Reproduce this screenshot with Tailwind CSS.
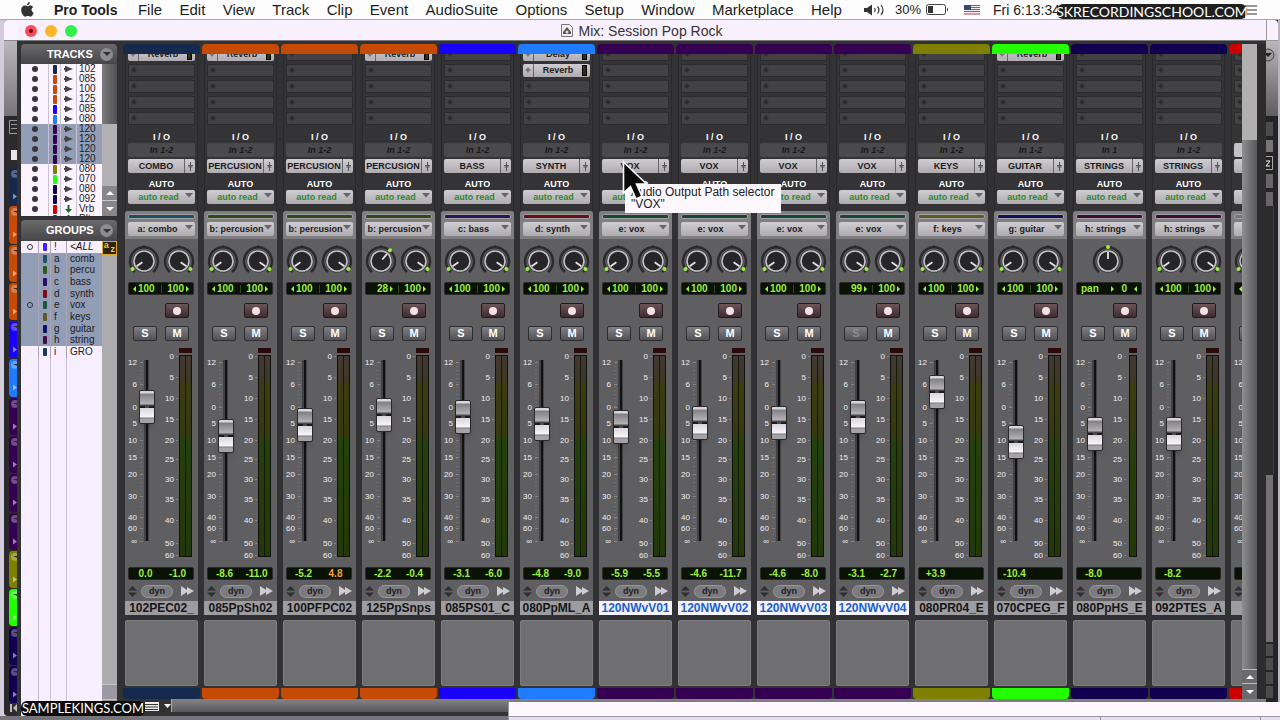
<!DOCTYPE html>
<html lang="en">
<head>
<meta charset="utf-8">
<title>Mix: Session Pop Rock</title>
<script src="https://cdn.jsdelivr.net/npm/@tailwindcss/browser@4"></script>
</head>
<body class="relative flex h-screen min-h-[720px] flex-col overflow-hidden bg-[#77757b] font-['Liberation_Sans',Arial,sans-serif] text-[#1c1c1c]">

<!-- System menu bar -->
<header class="flex h-5 shrink-0 items-center border-b border-[#a9a6ad] bg-[#fefdfe] text-[15px] leading-none whitespace-nowrap">
  <svg class="ml-[21px] h-[15px] w-[13px]" viewBox="0 0 13 15" fill="#333"><path d="M8.8 0C8.9 1.6 7.6 3.2 6.1 3.2 5.9 1.700 7.300.2 8.800 0zM6.500 4.300C7.200 4.300 8.100 3.500 9.400 3.500c1.200 0 2.200.6 2.800 1.500-2.400 1.500-2 4.700.5 5.700-.6 1.700-1.900 4-3.300 4-1 0-1.400-.6-2.600-.6s-1.700.6-2.600.6C2.500 14.700.2 11.300.2 8.100.2 5.200 2 3.600 3.900 3.600c1.100 0 2 .7 2.600.7z"/></svg>
  <nav class="ml-5 flex w-[788px] items-center justify-between">
    <a href="#" class="mr-[3px] text-sm leading-none font-bold">Pro Tools</a>
    <a href="#">File</a><a href="#">Edit</a><a href="#">View</a><a href="#">Track</a><a href="#">Clip</a><a href="#">Event</a><a href="#">AudioSuite</a><a href="#">Options</a><a href="#">Setup</a><a href="#">Window</a><a href="#">Marketplace</a><a href="#">Help</a>
  </nav>
  <div class="ml-[22px] flex items-center text-sm leading-none">
    <svg class="h-3 w-[22px]" viewBox="0 0 22 12" fill="none" stroke="#333" stroke-width="1.200"><path d="M0 4h3l5-3.500v11L3 8H0z" fill="#333" stroke="none"/><path d="M10.500 4q1.500 2 0 4M13.500 2.500q3 3.500 0 7M17 1q4 5 0 10"/></svg>
    <span class="ml-[9px] text-[13px]">30%</span>
    <svg class="ml-[5px] h-[11px] w-[23px]" viewBox="0 0 23 11"><rect x=".5" y=".5" width="19" height="10" rx="2" fill="none" stroke="#444"/><path d="M2 2h5v7H2z" fill="#333"/><path d="M21 3.500q2 2 0 4z" fill="#333"/></svg>
    <svg class="ml-[15px] h-[10px] w-4" viewBox="0 0 16 10"><path fill="#eee" d="M0 0h16v10H0z"/><path stroke="#c4454f" d="M0 .5h16M0 2.500h16M0 4.500h16M0 6.500h16M0 9h16"/><path fill="#3e4577" d="M0 0h7v5H0z"/></svg>
    <span class="ml-[13px] text-sm">Fri 6:13:34</span>
  </div>
  <svg class="mr-[23px] ml-auto h-[10px] w-3" viewBox="0 0 12 10" stroke="#333" stroke-width="1.200"><path d="M0 1h12M0 5h12M0 9h12"/></svg>
</header>

<main class="flex min-h-0 flex-1 pb-1">
  <!-- Edit window, left edge behind the mixer -->
  <aside class="flex w-[17px] shrink-0 bg-[#d3ccdc] pl-1">
    <div class="flex flex-1 flex-col overflow-hidden rounded-l-sm bg-[#2b2a2d]">
      <div class="h-[21px] shrink-0 border-b border-[#888] bg-[#faf3fd]"></div>
      <div class="h-[75px] shrink-0 bg-linear-to-b from-[#b9b7bb] to-[#77757a]"></div>
      <div class="flex h-[52px] shrink-0 flex-col items-end gap-4 pt-1">
        <svg class="h-[14px] w-2" viewBox="0 0 8 14"><path d="M8 .5H.5v13H8M2 4.500h6M2 8.500h6" fill="none" stroke="#999"/></svg>
        <div class="h-[10px] w-[6px] bg-[#e8e4ec]"></div>
      </div>
      <div id="edge" class="flex h-[536px] shrink-0 flex-col pl-[5px]"></div>
      <svg class="ml-[6px] h-2 w-[7px] shrink-0" viewBox="0 0 7 8"><path d="M0 0h2v8H0zM7 0v8L3 4z" fill="#bbb"/></svg>
    </div>
  </aside>

  <!-- Mix window -->
  <section class="flex min-w-0 flex-1 flex-col bg-[#323134]">
    <div class="relative flex h-[21px] shrink-0 items-center border-b border-[#777] bg-[#f9f0fd]">
      <div class="flex gap-2 pt-px pl-2">
        <button aria-label="Close" class="flex size-3 items-center justify-center rounded-full bg-[#fb4a5c]"><span class="size-1 rounded-full bg-[#5c0810]"></span></button>
        <button aria-label="Minimize" class="size-3 rounded-full bg-[#fdb62a]"></button>
        <button aria-label="Zoom" class="size-3 rounded-full bg-[#2ff048]"></button>
      </div>
      <h1 class="absolute inset-0 flex items-center justify-center gap-[6px] pt-px text-sm leading-none text-[#333]">
        <svg class="h-[13px] w-3" viewBox="0 0 12 13"><path d="M.5.500h8l3 3v9H.5z" fill="#eee" stroke="#777"/><path d="M2 10V8l4-5 4 5v2z" fill="#555"/><circle cx="6" cy="8" r="1.500" fill="#ddd"/></svg>
        Mix: Session Pop Rock
      </h1>
    </div>

    <div class="flex min-h-0 flex-1 pt-[3px] pl-1">
      <!-- Track and group lists -->
      <aside class="flex w-24 shrink-0 flex-col">
        <h2 class="flex h-5 shrink-0 items-center rounded-t bg-linear-to-b from-[#6a696c] to-[#464548] pl-[26px] text-[11px] font-bold text-white">TRACKS
          <button aria-label="Track list menu" class="mr-1 ml-auto flex size-[13px] items-center justify-center rounded-full bg-[#8d8c90]"><svg class="h-1 w-2" viewBox="0 0 8 4"><path d="M0 0h8L4 4z" fill="#333"/></svg></button>
        </h2>
        <div class="flex h-[152px] shrink-0 overflow-hidden">
          <ul id="tracks" class="grid h-[160px] flex-1 grid-rows-16 bg-[#fbf3ff] text-[10px] leading-none"></ul>
          <div class="flex w-[15px] shrink-0 flex-col bg-linear-to-r from-[#7c7b7e] to-[#515053]">
            <div class="flex-1"></div><div class="h-[62px] bg-[#b3b1b4]"></div>
            <button aria-label="Scroll up" class="flex h-[15px] items-center justify-center border-b border-[#ccc] bg-[#88868a]"><svg class="h-1 w-2" viewBox="0 0 8 4"><path d="M0 4h8L4 0z" fill="#fff"/></svg></button>
            <button aria-label="Scroll down" class="flex h-[15px] items-center justify-center bg-[#88868a]"><svg class="h-1 w-2" viewBox="0 0 8 4"><path d="M0 0h8L4 4z" fill="#fff"/></svg></button>
          </div>
        </div>
        <h2 class="mt-1 flex h-[21px] shrink-0 items-center rounded-t bg-linear-to-b from-[#6a696c] to-[#464548] pl-[25px] text-[11px] font-bold text-white">GROUPS
          <button aria-label="Group list menu" class="mr-1 ml-auto flex size-[13px] items-center justify-center rounded-full bg-[#8d8c90]"><svg class="h-1 w-2" viewBox="0 0 8 4"><path d="M0 0h8L4 4z" fill="#333"/></svg></button>
        </h2>
        <div class="flex flex-1">
          <div class="flex flex-1 flex-col bg-[#f7eeff]">
            <ul id="groups" class="grid h-[117px] grid-rows-10 text-[10px] leading-none"></ul>
            <div class="flex flex-1"><div class="w-[18px] border-r border-[#c9c0d2]"></div><div class="w-3 border-r border-[#c9c0d2]"></div><div class="w-4 border-r border-[#c9c0d2]"></div></div>
          </div>
          <div class="flex w-[15px] flex-col bg-[#adacae]">
            <button aria-label="Sort groups" class="flex h-[14px] border border-[#e0a820] bg-[#2b2410] text-[9px] leading-none font-bold text-[#ffc32a]"><span class="-mt-px flex-1">a</span><span class="mt-[3px] flex-1">z</span></button>
            <div class="mt-auto h-4 border-y border-[#c5c2c8] bg-[#9c9aa0]"></div><div class="h-4 bg-[#9c9aa0]"></div>
          </div>
        </div>
      </aside>

      <!-- Mixer -->
      <div class="ml-[6px] flex min-w-0 flex-1 flex-col">
        <div class="flex min-h-0 flex-1">
          <div id="strips" class="flex min-w-0 flex-1 overflow-hidden"></div>
          <div class="flex w-[15px] shrink-0 flex-col bg-linear-to-r from-[#8f8e91] to-[#58575a]">
            <div class="h-24 bg-[#b1b0af]"></div><div class="flex-1"></div>
            <button aria-label="Scroll mixer up" class="flex h-[15px] items-center justify-center border-y border-[#bbb] bg-[#6a696c]"><svg class="h-1 w-2" viewBox="0 0 8 4"><path d="M0 4h8L4 0z" fill="#fff"/></svg></button>
            <button aria-label="Scroll mixer down" class="flex h-[15px] items-center justify-center bg-[#6a696c]"><svg class="h-1 w-2" viewBox="0 0 8 4"><path d="M0 0h8L4 4z" fill="#fff"/></svg></button>
          </div>
          <div class="w-[9px] shrink-0 bg-[#2c2b2e]"></div>
        </div>
        <div class="flex h-[17px] shrink-0 items-start">
          <button aria-label="View options" class="ml-[22px] flex h-[14px] w-[26px] items-center gap-[5px]">
            <svg class="h-[9px] w-[14px]" viewBox="0 0 14 9"><path d="M0 0h14v9H0z" fill="#eee"/><path d="M0 2.500h13M0 5h13M0 7.500h13" stroke="#333"/></svg>
            <svg class="h-1 w-[7px]" viewBox="0 0 7 4"><path d="M0 0h7L3.500 4z" fill="#fff"/></svg>
          </button>
          <div class="h-[13px] flex-1 border-l border-[#aaa] bg-linear-to-b from-[#858487] to-[#59585b]"></div>
        </div>
      </div>
    </div>
  </section>

  <!-- Edit window, right edge behind the mixer -->
  <aside class="flex w-[14px] shrink-0 flex-col border-r-2 border-[#b9b4c0] bg-[#242326]">
    <div class="h-[21px] shrink-0 rounded-tr border-b border-l border-[#999] bg-[#f9f0fd]"></div>
    <div class="flex h-[75px] shrink-0 bg-linear-to-b from-[#b9b7bb] to-[#5f5d62] pt-[7px]"><svg class="h-[14px] w-[9px]" viewBox="0 0 9 14"><circle cx="2" cy="7" r="6" fill="#99979b" stroke="#444"/><path d="M-2 5h8L2 9z" fill="#222"/></svg></div>
    <div class="flex h-[90px] shrink-0 flex-col gap-1 pt-[6px]">
      <div class="h-[14px] w-[7px] bg-[#4c4b4e]"></div><div class="h-[12px] w-[7px] bg-[#77757a]"></div><svg class="h-[14px] w-[7px]" viewBox="0 0 7 14"><path d="M0 .5h6.500v13H0" fill="#222" stroke="#aaa"/><path d="M0 5h4L0 10h4" fill="none" stroke="#fff"/></svg><div class="h-[14px] w-[7px] bg-[#67656a]"></div><div class="h-[14px] w-[7px] bg-[#67656a]"></div>
    </div>
    <div class="w-[8px] flex-1 border-r border-[#3f3e41] bg-[#2c2b2e]"></div>
    <div class="h-[167px] w-[7px] shrink-0 bg-[#737175]"></div>
    <div class="flex h-[74px] shrink-0 flex-col gap-[2px] pt-[2px]"><div class="h-3 w-[7px] bg-[#4c4b4e]"></div><div class="h-3 w-[7px] bg-[#4c4b4e]"></div><div class="h-3 w-[7px] bg-[#4c4b4e]"></div><div class="h-3 w-[7px] bg-[#4c4b4e]"></div></div>
  </aside>
</main>

<!-- Window in front at the bottom edge -->
<div class="absolute right-0 bottom-0 left-[508px] flex h-[18px] flex-col border-l border-[#999] bg-[#fdf8fe]">
  <div class="mt-auto flex h-1 border-t border-[#9a97a8] bg-[#e3e0ee]"><div class="flex-1"></div><div class="w-[161px] border-x border-[#9a97a8]"></div><div class="w-[19px]"></div></div>
</div>

<!-- Output selector tooltip and pointer -->
<div role="tooltip" class="absolute top-[184px] left-[625px] h-[29px] w-[156px] bg-[#fcf8fd] pt-[2px] pl-[6px] text-xs leading-3 whitespace-nowrap text-[#222]">Audio Output Path selector<br>"VOX"</div>
<svg class="absolute top-[160px] left-[622px] h-[42px] w-[28px]" viewBox="0 0 28 42"><path d="M1.500 2v31l7-6.500 5.500 12.500 6-2.700-5.500-12.300h10z" fill="#0a0a0a" stroke="#fff" stroke-width="1.600"/></svg>

<!-- Watermarks -->
<div class="absolute top-1 right-[33px] flex h-[15px] w-[190px] items-center justify-center rounded-md bg-[#1f1f1f] font-[Lato,sans-serif] text-sm leading-none whitespace-nowrap text-white">SKRECORDINGSCHOOL.COM</div>
<div class="absolute bottom-1 left-[21px] flex h-[15px] w-[124px] items-center justify-center rounded-md bg-[#0c0c0c] font-[Lato,sans-serif] text-[13px] leading-none whitespace-nowrap text-white">SAMPLEKINGS.COM</div>

<script>
const C = {navy:'#15294f', orange:'#c64a04', blue:'#1a00ff', sky:'#1f7bff', purple:'#360052', olive:'#808000', green:'#22ff00', ink:'#11004f', red:'#cc0000'};
const G = {'a: combo':'#1f4d63','b: percusion':'#2c4a18','c: bass':'#2c1058','d: synth':'#6b0c14','e: vox':'#17482f','f: keys':'#5f5a20','g: guitar':'#10105a','h: strings':'#3f0a3a','':'#77757a'};

document.getElementById('edge').innerHTML = ['navy','orange','orange','orange','blue','sky','purple','purple','purple','purple','olive','green','ink','ink'].map(c => `
  <div class="mb-px flex-1 overflow-hidden rounded-l" style="background:${C[c]}">
    <svg class="h-full w-full" viewBox="0 0 8 38"><circle cx="6" cy="6" r="4" fill="#fff" fill-opacity=".3"/><path d="M4 5h4v2z" fill="#222"/><path d="M4 26l4 3-4 3z" fill="#fff" fill-opacity=".5"/></svg>
  </div>`).join('');

const tracks = [['navy','102'],['orange','085'],['orange','100'],['orange','125'],['blue','085'],['sky','080'],['purple','120',1],['purple','120',1],['purple','120',1],['purple','120',1],['olive','080'],['green','070'],['ink','080'],['ink','092'],['red','Vrb'],['red','Plt']];
document.getElementById('tracks').innerHTML = tracks.map(([c, n, sel], i) => `
  <li class="flex items-stretch ${sel ? 'bg-[#929db6]' : ''}">
    <span class="flex w-7 items-center justify-center border-r border-[#c9c0d2]"><i class="size-[6px] rounded-full bg-[#3a353d]"></i></span>
    <span class="flex w-3 items-center justify-center border-r border-[#c9c0d2]"><i class="h-[9px] w-1 rounded-[1px]" style="background:${C[c]}"></i></span>
    <span class="flex w-4 items-center justify-center border-r border-[#c9c0d2]"><svg class="h-2 w-[9px]" viewBox="0 0 9 8">${i > 13 ? '<path d="M3.500 0h2v4H8L4.500 8 1 4h2.500z" fill="#1d6a22"/>' : '<path d="M0 3h1V1h1l3 1.500L9 4 5 5.500 2 7H1V5H0z" fill="#444"/>'}</svg></span>
    <span class="flex items-center pl-[2px]">${n}</span>
  </li>`).join('');

const groups = [['#4a1cff','!','&lt;ALL',0,1],['#1f4d63','a','comb',1],['#2c5a18','b','percu',1],['#2c0a68','c','bass',1],['#7b0c1c','d','synth',1],['#17583f','e','vox',1,1],['#5f5a20','f','keys',1],['#10106a','g','guitar',1],['#3f0a4a','h','string',1],['#1c3a5a','i','GRO',0]];
document.getElementById('groups').innerHTML = groups.map(([c, k, n, sel, ring], i) => `
  <li class="flex items-stretch ${sel ? 'bg-[#929db6]' : ''}">
    <span class="flex w-[18px] items-center justify-center border-r border-[#aaa5b8]">${ring ? '<i class="size-[6px] rounded-full border border-[#333]"></i>' : ''}</span>
    <span class="flex w-3 items-center justify-center border-r border-[#aaa5b8]"><i class="h-2 w-1 rounded-[1px]" style="background:${c}"></i></span>
    <span class="flex w-4 items-center border-r border-[#aaa5b8] pl-[3px]">${k}</span>
    <span class="flex items-center pl-[3px] ${i ? '' : 'italic'}">${n}</span>
  </li>`).join('');

const tl = '<svg class="h-[6px] w-[3px]" viewBox="0 0 3 6"><path d="M3 0v6L0 3z" fill="#9cf03a"/></svg>';
const tr = '<svg class="h-[6px] w-[3px]" viewBox="0 0 3 6"><path d="M0 0v6l3-3z" fill="#9cf03a"/></svg>';
const wide = [tl + '100', '100' + tr];

// colour, output, group, pan, levels, name, fader travel from the bottom, options
const strips = [
  ['navy','COMBO','a: combo',wide,['0.0','-1.0'],'102PEC02_',134,{ins:'Reverb'}],
  ['orange','PERCUSION','b: percusion',wide,['-8.6','-11.0'],'085PpSh02',105,{ins:'Reverb'}],
  ['orange','PERCUSION','b: percusion',wide,['-5.2','4.8'],'100PFPC02',116,{hot:1}],
  ['orange','PERCUSION','b: percusion',['<i class="w-[5px]"></i>28' + tr, '100' + tr],['-2.2','-0.4'],'125PpSnps',126,{ins:'Reverb',ang:40}],
  ['blue','BASS','c: bass',wide,['-3.1','-6.0'],'085PS01_C',124,{}],
  ['sky','SYNTH','d: synth',wide,['-4.8','-9.0'],'080PpML_A',117,{ins:'Delay',ins2:'Reverb'}],
  ['purple','VOX','e: vox',wide,['-5.9','-5.5'],'120NWvV01',114,{sel:1}],
  ['purple','VOX','e: vox',wide,['-4.6','-11.7'],'120NWvV02',118,{sel:1}],
  ['purple','VOX','e: vox',wide,['-4.6','-8.0'],'120NWvV03',118,{sel:1}],
  ['purple','VOX','e: vox',['<i class="w-[5px]"></i>99' + tr, '100' + tr],['-3.1','-2.7'],'120NWvV04',124,{sel:1,dim:1,ang:125}],
  ['olive','KEYS','f: keys',wide,['+3.9',''],'080PR04_E',149,{}],
  ['green','GUITAR','g: guitar',wide,['-10.4',''],'070CPEG_F',99,{ins:'Reverb'}],
  ['ink','STRINGS','h: strings',['pan', tr + '<i class="w-[3px]"></i>0<i class="w-[3px]"></i>' + tl],['-8.0',''],'080PpHS_E',107,{mono:1}],
  ['ink','STRINGS','h: strings',wide,['-8.2',''],'092PTES_A',107,{}],
  ['red','','',wide,['',''],'',-17,{blank:1}]
];

const knob = (cx, a) => {
  const r = a * Math.PI / 180, s = Math.sin(r), c = -Math.cos(r);
  return `<path d="M${cx - 9} 33A14 14 0 1 1 ${cx + 9} 33" fill="none" stroke="#2a292b" stroke-width="2.400"/><path d="M${cx - 2} 8l2-2 2 2z" fill="#222"/>
  <circle cx="${cx}" cy="22" r="11.500" fill="#38373a"/><circle cx="${cx}" cy="22" r="10" fill="#262528" stroke="#c4c2c6" stroke-width="1.600"/>
  <path d="M${cx + s * 2} ${22 + c * 2}L${cx + s * 9} ${22 + c * 9}" stroke="#e6e4e8" stroke-width="1.800"/><circle cx="${cx + s * 14}" cy="${22 + c * 14}" r="2" fill="#9cf03a"/>`;
};
const L = [['12',19],['6',41],['0',64],['5',80],['10',97],['15',114],['20',131],['30',153],['40',174],['60',185],['∞',198]];
const R = [['0',13],['5',34],['10',55],['15',76],['20',97],['25',116],['30',136],['35',156],['40',177],['50',200],['60',212]];
const scale = (mono) => {
  const x = mono ? 56 : 54, w = mono ? 8 : 13;
  let t = '';
  for (let y = 19; y < 198; y += 4) t += `M15 ${y + .5}h2`;
  return `<svg class="absolute inset-0 h-[215px] w-[73px]" viewBox="0 0 73 215" font-size="8" fill="#f0eef2">
    <path d="${t}" stroke="#6f6e72"/>
    <path d="${R.map(r => `M51 ${r[1] + .5}h2`).join('')}${L.map(r => `M15 ${r[1] + .5}h3`).join('')}" stroke="#858488"/>
    <path d="M19 17h5v181h-5z" fill="#424144"/><path d="M21 17h2v181h-2z" fill="#111"/>
    <path d="M${x} 5h${w}v5h-${w}z" fill="#2c090b"/>
    <path d="M${x} 12h${w}v202h-${w}z" fill="#111"/><path d="M${x + 1} 13h${w - 2}v200h-${w - 2}z" fill="url(#meter)"/>
    ${mono ? '' : '<path d="M60 13h1v200h-1z" fill="#15180c"/>'}
    <g text-anchor="end">${L.map(r => `<text x="12" y="${r[1] + 3}">${r[0]}</text>`).join('')}${R.map(r => `<text x="49" y="${r[1] + 3}">${r[0]}</text>`).join('')}</g></svg>`;
};
const plus = (f) => `<svg class="size-[6px]" viewBox="0 0 6 6"><path d="M3 0l1.200 1.800L6 3 4.200 4.200 3 6 1.800 4.200 0 3l1.800-1.200z" fill="${f}"/></svg>`;
const insert = (n) => `<button class="flex h-[13px] w-full shrink-0 items-center rounded-[2px] bg-linear-to-b from-[#cfccd2] to-[#aeacb1] text-[9px] leading-none font-bold"><span class="h-full w-[11px] border-r border-[#666] pt-[3px] pl-[2px]">${plus('#77757a')}</span><span class="flex-1 text-center">${n}</span><i class="mr-[3px] h-[11px] w-[5px] border border-black bg-[#2b3012]"></i></button>`;
const slot = `<div class="h-[13px] shrink-0 border border-[#2c2b2e] bg-[#424144] pt-[2px] pl-[2px]">${plus('#2c2b2e')}</div>`;
const arrow = `<svg class="pointer-events-none absolute top-[3px] right-[2px] h-[5px] w-2" viewBox="0 0 8 5"><path d="M0 0h8L4 4.500z" fill="#66646a"/></svg>`;
const led = 'mx-[3px] mr-1 flex h-[13px] items-center rounded-[2px] border border-[#2a292b] bg-[#0a1206] text-[10px] leading-none font-bold text-[#9cf03a]';

document.getElementById('strips').innerHTML = strips.map(([c, out, grp, pan, lev, name, fad, o]) => `
<section class="flex w-[79px] shrink-0 flex-col" aria-label="${name}">
  <div class="mr-[2px] h-[10px] shrink-0 rounded-t" style="background:${C[c]}"></div>
  <div class="mr-1 ml-[2px] flex shrink-0 flex-col border-x border-[#29282b] bg-[#343336] pr-[2px] pl-[2px]">
    <div class="flex h-[7px] flex-col justify-end overflow-hidden">${o.ins ? insert(o.ins) : slot}</div>
    <div class="mt-[3px] flex flex-col gap-[3px]">${o.ins2 ? insert(o.ins2) : slot}${slot}${slot}${slot}</div>
    <div class="mt-[6px] h-3 text-center text-[9px] leading-3 font-bold text-white">I / O</div>
    <button class="h-[14px] rounded-[2px] text-[9px] leading-none font-bold italic ${o.blank ? 'bg-[#c4c2c7]' : 'bg-[#4a494c] text-[#19181a]'}">${o.blank ? '' : o.mono ? 'In 1' : 'In 1-2'}</button>
    <button class="mt-[2px] flex h-[14px] items-center rounded-[2px] bg-linear-to-b from-[#cfccd2] to-[#aeacb1] text-[9px] leading-none font-bold"><span class="flex w-[56px] justify-center">${out}</span><span class="flex h-full flex-1 items-center justify-center border-l border-[#666]"><svg class="h-[9px] w-[5px]" viewBox="0 0 5 9"><path d="M2.500 0v9M0 3.500h5M.5 5h4" stroke="#555"/></svg></span></button>
    <div class="mt-[5px] h-3 text-center text-[9px] leading-3 font-bold text-white">AUTO</div>
    <div class="relative h-[14px]"><select aria-label="Automation mode" class="block h-[14px] w-full appearance-none rounded-[2px] bg-linear-to-b from-[#cfccd2] to-[#aeacb1] pr-[6px] text-center text-[9px] leading-none font-bold text-[#2f8a2a]"><option>${o.blank ? '' : 'auto read'}</option></select>${arrow}</div>
    <div class="h-[7px]"></div>
  </div>
  <div class="mr-1 ml-[2px] flex w-[73px] shrink-0 flex-col rounded-t-[3px] bg-[#5f5e61]">
    <div class="h-7 shrink-0 rounded-t-[3px] bg-[#7f7e81] px-[3px] pt-[3px]">
      <div class="h-[5px] rounded-[2px] border border-[#a09fa2]" style="background:${G[grp]}"></div>
      <div class="relative mt-[3px] h-[14px]"><select aria-label="Group" class="block h-[14px] w-full appearance-none rounded-[2px] bg-linear-to-b from-[#cfccd2] to-[#aeacb1] pr-[8px] text-center text-[9px] leading-none font-bold"><option>${grp}</option></select>${arrow}</div>
    </div>
    <svg class="h-[43px] w-[73px]" viewBox="0 0 73 43">${o.mono ? knob(35, 0) : knob(19, o.ang || 235) + knob(54, 125)}</svg>
    <div class="${led} justify-between px-1"><span class="flex items-center gap-[2px]">${pan[0]}</span>${o.mono ? '' : '<i class="h-2 w-px bg-[#2e4a18]"></i>'}<span class="flex items-center gap-[2px]">${pan[1]}</span></div>
    <div class="mt-2 flex h-[15px] justify-end pr-[9px]"><button aria-label="Record enable" class="flex w-6 items-center justify-center rounded-[2px] border border-[#241a1c] bg-linear-to-b from-[#6b5558] to-[#3f2c30]"><i class="size-2 rounded-full bg-[#f7dfe6]"></i></button></div>
    <div class="mt-2 flex h-[15px] justify-end gap-2 pr-[9px] text-[11px] leading-none font-bold text-white">
      <button class="w-6 rounded-[2px] border border-[#2d2c2f] bg-linear-to-b from-[#807f83] to-[#525155] ${o.dim ? 'text-[#aaa]/60' : ''}">S</button>
      <button class="w-6 rounded-[2px] border border-[#2d2c2f] bg-linear-to-b from-[#807f83] to-[#525155]">M</button>
    </div>
    <div class="relative mt-[2px] h-[215px]">${scale(o.mono)}
      ${o.blank ? '' : `<input type="range" aria-label="Volume" min="0" max="181" value="${fad}" class="absolute top-0 left-[14px] m-0 h-[215px] w-4 appearance-none bg-transparent [direction:rtl] [writing-mode:vertical-lr] [&::-webkit-slider-thumb]:h-[34px] [&::-webkit-slider-thumb]:w-4 [&::-webkit-slider-thumb]:appearance-none [&::-webkit-slider-thumb]:rounded-[2px] [&::-webkit-slider-thumb]:border [&::-webkit-slider-thumb]:border-[#2a292b] [&::-webkit-slider-thumb]:bg-[linear-gradient(90deg,#1c1c1c_5px,transparent_5px_9px,#1c1c1c_9px),linear-gradient(#d8d6da_0_2px,#807f83_3px,#b5b3b8_13px,#4a494c_14px_17px,#d8d6dc_17px,#f8f5fa_26px,#77767a_27px,#a5a3a8_28px)] [&::-webkit-slider-thumb]:bg-[length:100%_2px,100%_100%] [&::-webkit-slider-thumb]:bg-[position:0_15px,0_0] [&::-webkit-slider-thumb]:bg-no-repeat [&::-webkit-slider-thumb]:shadow-md">`}
    </div>
    <div class="mt-[9px] ${led}"><span class="w-[33px] text-center">${lev[0]}</span><span class="flex-1 text-center ${o.hot ? 'text-[#f5a030]' : ''}">${lev[1]}</span></div>
    <div class="mt-1 flex h-[14px] items-center justify-between pr-1 pl-[3px]">
      <svg class="h-[11px] w-[9px]" viewBox="0 0 9 11"><path d="M0 4.500h9L4.500 0zM0 6.500h9L4.500 11z" fill="#2f2e31"/></svg>
      <button class="mr-1 h-[13px] w-8 rounded-full border border-[#98979b] bg-[#7c7b7f] text-[9px] leading-none font-bold">dyn</button>
      <svg class="h-[10px] w-[13px]" viewBox="0 0 13 10"><path d="M0 0l6 4V1l7 4-7 4V6l-6 4z" fill="#cfcdd1"/></svg>
    </div>
    <div class="mt-[3px] h-[14px] overflow-hidden text-center text-xs leading-[14px] font-bold whitespace-nowrap ${o.sel ? 'bg-[#f4f2fa] text-[#1a5fd0]' : 'bg-[#9d9ca0] text-[#161616]'}">${name}</div>
  </div>
  <div class="mt-[5px] mr-1 ml-[2px] flex-1 rounded-[2px] border border-[#7d7c80] bg-[#6f6e71]"></div>
  <div class="mt-[2px] mr-[2px] h-[11px] shrink-0 rounded-b" style="background:${C[c]}"></div>
</section>`).join('');
</script>
<svg class="absolute size-0" aria-hidden="true"><defs><linearGradient id="meter" x1="0" y1="0" x2="0" y2="1"><stop offset="0" stop-color="#413932"/><stop offset=".13" stop-color="#3f3724"/><stop offset=".14" stop-color="#3c3c10"/><stop offset=".4" stop-color="#353a0e"/><stop offset=".42" stop-color="#25400c"/><stop offset="1" stop-color="#22380a"/></linearGradient></defs></svg>
</body>
</html>
